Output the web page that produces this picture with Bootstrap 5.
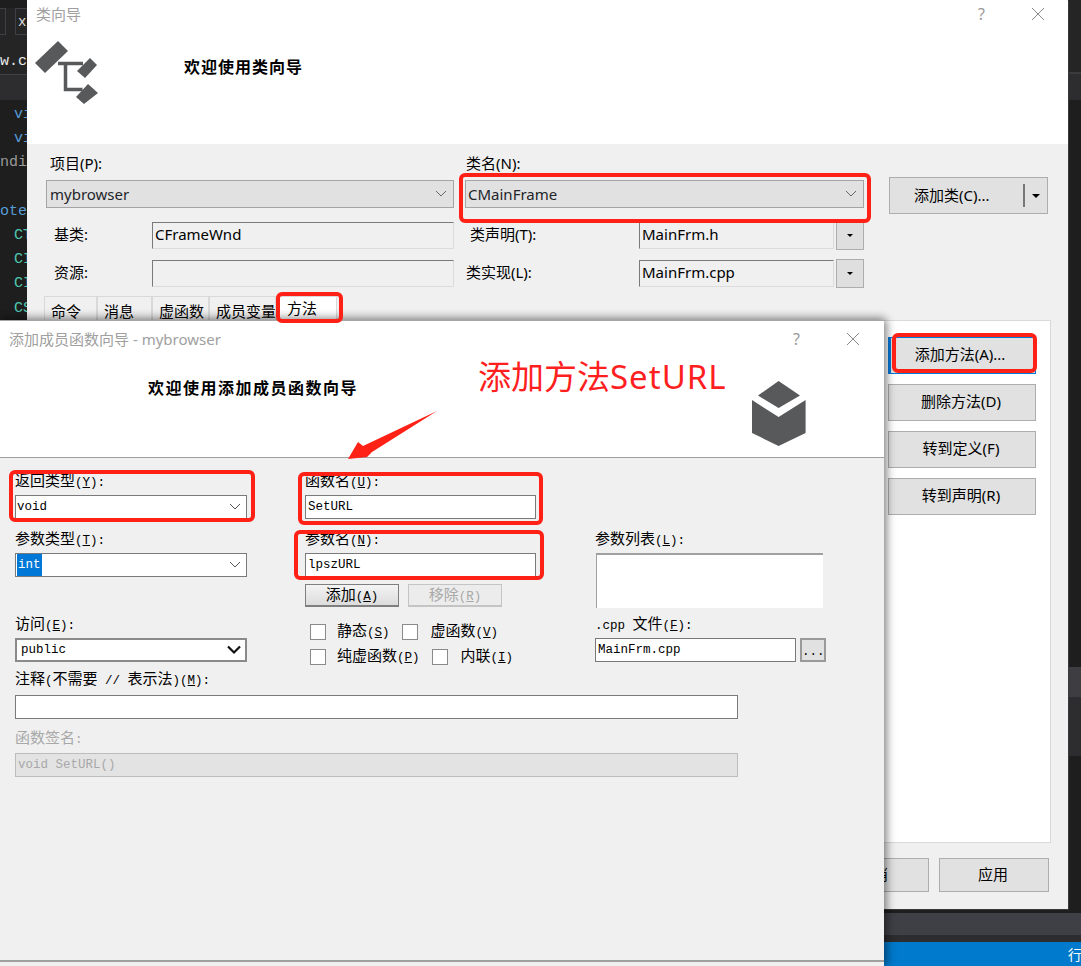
<!DOCTYPE html>
<html lang="zh-CN">
<head>
<meta charset="utf-8">
<title>类向导</title>
<link href="https://cdn.jsdelivr.net/npm/bootstrap@5.3.0/dist/css/bootstrap.min.css" rel="stylesheet">
<style>
html,body{margin:0;height:966px;overflow:hidden}
body{background:#1e1e1e;font-family:"Noto Sans","Noto Sans CJK SC",sans-serif;font-size:15px;line-height:17px;color:#000}
.desk{position:relative;width:1081px;height:966px;overflow:hidden}
.desk-top{height:913px}
.strip-l{width:27px;overflow:hidden;background:#1e1e1e}
.strip-r{width:13px;overflow:hidden}
.lt1{height:8px;background:#1e1e1e}
.lt2{height:27px;background:#252526;padding-right:0;gap:9px}
.lt2 i{display:block;border:1px solid #3f3f46;height:27px;width:6px;border-left:0}
.lt2 b{display:block;border:1px solid #3f3f46;border-right:0;height:27px;width:12px;color:#ddd;font:400 14px/26px "Liberation Mono",monospace;padding-left:2px}
.lt3{height:40px;background:#252526;color:#e8e8e8;font:15px/53px "Liberation Mono",monospace;border-bottom:1px solid #3f3f46;white-space:nowrap}
.lt4{height:25px;background:#2d2d30}
.codeln{font:15px/24.2px "Liberation Mono",monospace;white-space:nowrap;height:24.2px}
.codepad{padding-top:3px}
.ind{padding-left:14px}
.c-b{color:#569cd6}.c-g{color:#9b9b9b}.c-t{color:#4ec9b0}
.r1{height:72px;background:#252526}.r2{height:28px;background:#2d2d30;border-top:2px solid #3a3a3d}
.r3{height:567px;background:#1e1e1e}.r4{height:30px;background:#3e3e42}.r5{height:59px;background:#2d2d30}
.bar1{height:22px;background:#3f3f46}
.bar2{height:7px;background:#2d2d30}
.bar3{height:24px;background:#007acc;color:#fff;font-size:14px;line-height:25px;padding-left:1068px;white-space:nowrap}
.win{position:absolute;background:#f0f0f0}
.win-back{left:27px;top:0;width:1041px;height:909px;box-shadow:1px 1px 0 #3a3a3a}
.win-front{left:0;top:320px;width:884px;height:646px;border-top:1px solid #a6a6a6;box-shadow:0 -3px 8px rgba(0,0,0,.22),3px 0 9px rgba(0,0,0,.38)}
.head-back{height:144px;background:#fff}
.head-front{height:137px;background:#fff;border-bottom:1px solid #a0a0a0}
.ttl{color:#a0a0a0}
.ttl-back{height:28px;padding:0 23px 0 9px}
.ttl-front{height:36px;padding:0 24px 0 9px}
.help{font-size:16px;margin-right:46px;color:#9a9a9a}
.welcome{font-weight:700;font-size:16px;letter-spacing:1px;line-height:20px}
.w-back{margin:29px 0 0 85px}
.w-front{margin:21px 0 0 148px;letter-spacing:1.5px}
.icon-a{margin:13px 0 0 8px;display:block}
.body-back{height:765px;padding:11px 0 0 19px}
.form-a{display:grid;grid-template-columns:408px 399px;column-gap:11px}
.lab1{padding-left:4px;height:25px}
.lab2{padding-left:1px;height:25px}
.form-select.dd{background-image:none;height:28px;border:1px solid #a5a5a5;border-radius:0;background-color:#e1e1e1;padding:0 6px 0 3px;font-size:15px;line-height:26px;box-shadow:none}
.form-select.dd.cn{padding-left:2px}
.btn.vs{background:#e1e1e1;border:1px solid #adadad;border-radius:0;color:#000;font-size:15px;padding:0;line-height:17px}
.btn.vs.btn-class{width:159px;height:37px;margin:22px 0 0 25px;padding:0 0 0 24px;flex:none}
.btn-class .sep{width:2px;height:23px;background:#777;margin-left:33px}
.btn-class .car,.btn-mini .car{width:0;height:0;border:4px solid transparent;border-top-color:#000;border-bottom:0}
.btn-class .car{margin:0 0 0 7px}
.row2{display:grid;grid-template-columns:106px 302px 11px 174px 195px 28px;align-items:center;height:27px;margin-top:7px}
.row2.second{margin-top:11px}
.lb{padding-left:8px}
.lb-r{padding-left:5px}
.lb-r.flush{padding-left:1px}
.lb,.lb-r{padding-bottom:2px}
.form-control.ro{height:27px;border-radius:0;border:1px solid #7a7a7a;border-right-color:#dcdcdc;border-bottom-color:#dcdcdc;background:#f0f0f0;padding:0 2px 4px 2px;font-size:15px;color:#000;box-shadow:none}
.btn.vs.btn-mini{height:29px;width:28px;margin-left:2px;padding:0;background:#dfdfdf;border-color:#adadad}
.btn-mini .car{border-width:3px;border-bottom:0}
.tabbar{margin-left:-2px;height:24px;margin-top:10px;border:0;flex-wrap:nowrap}
.tabbar .nav-link{height:24px;border:1px solid #d9d9d9;border-width:1px 1px 0 1px;border-radius:0;margin:0;padding:5px 0 0 6px;background:#f0f0f0;color:#000;font-size:15px;line-height:19px;white-space:nowrap;overflow:hidden}
.tabbar .nav-link.active{background:#fff;border-color:#d9d9d9;padding:2px 0 0 10px;width:61px}
.t1{width:53px}.t2{width:55px}.t3{width:57px}.t4{width:67px}
.panel{width:1007px;margin-left:-2px;height:523px;background:#fff;border:1px solid #d9d9d9;padding:16px 14px 0 0;gap:10px}
.btn.vs.side{width:148px;height:37px;padding:0 2px 2px 0}
.btn.vs.side.cur{border:1px solid #0078d7;border-left-width:3px;padding-right:6px}
.foot{margin-top:15px;width:1003px;gap:10px}
.btn.vs.footb{width:110px;height:34px;padding:0 2px 1px 0}
.body-front{padding:14px 0 0 15px;font-family:"Noto Sans CJK SC",sans-serif;font-size:15px;line-height:16px}
.lt{font-family:"Liberation Mono",monospace;font-size:12.5px}
.gridf{display:grid;grid-template-columns:232px 231px 231px;column-gap:58px}
.gridf .gap-b{margin-top:11px}
.c3{margin-left:1px}
.fld-lab{height:23px;white-space:nowrap}
.form-select.cb,.form-control.tx{height:24px;border-radius:0;border:1px solid #7a7a7a;background:#fff;padding:0 1px 0 2px;font-family:"Liberation Mono",monospace;font-size:12.5px;line-height:22px;box-shadow:none;color:#000}
.form-select.cb{background-image:none;padding:0 5px 0 1px}
.form-select.cb.thick{border:2px solid #8a8a8a;padding:0 4px}
.sel{background:#0078d7;color:#fff;padding:0 1px}
.listbox{height:55px;width:227px;margin-left:1px;background:#fff;border-top:2px solid #a0a0a0;border-left:1px solid #a0a0a0}
.btn.small-b{width:94px;height:23px;border:1px solid #7f7f7f;border-bottom-width:2px;background:linear-gradient(#f4f4f4,#dcdcdc);color:#000;font-family:"Noto Sans CJK SC",sans-serif;padding:0;line-height:17px;border-radius:0;font-size:15px}
.btn.small-b:disabled{opacity:1;color:#a8a8a8;background:#ececec;border-color:#c4c4c4}
.rowc{margin-top:7px;gap:9px}
.rowd{margin-top:7px}
.chk-wrap{margin-top:7px;height:47px;padding:4px 0 0 5px;line-height:18px}
.chk-line{height:25px;white-space:nowrap}
.chk-line .form-check-input{width:16px;height:16px;margin:0 11px 0 0;border-radius:0;border:1px solid #8a8a8a;flex:none;background-color:#fff}
.chk-line label+.form-check-input{margin-left:12px;margin-right:13px}
.btn.dots{width:26px;height:24px;margin-left:4px;padding:0;border:2px solid #9a9a9a;background:#e1e1e1;font-family:"Liberation Mono",monospace;font-size:12.5px;line-height:24px;border-radius:0;color:#000}
.form-control.cppw{width:201px;flex:none}
.wide{width:723px}
.lab-wide{margin-top:8px;height:25px}
.lab-dis{margin-top:10px;height:24px;color:#a8a8a8}
.form-control.tx.dis{background:#e3e3e3;border:1px solid #bcbcbc;color:#a8a8a8}
.front-bot{position:absolute;left:0;right:0;bottom:4px;height:2px;background:#a0a0a0}
.mark-box{position:absolute;border:4px solid #ff2116;border-radius:6px;pointer-events:none}
.mb1{left:459px;top:173px;width:412px;height:50px}
.mb2{left:276px;top:292px;width:67px;height:31px}
.mb3{left:892px;top:333px;width:145px;height:40px}
.mb4{left:9px;top:470px;width:246px;height:52px}
.mb5{left:298px;top:472px;width:245px;height:53px}
.mb6{left:294px;top:530px;width:250px;height:50px}
.mark-text{position:absolute;left:478px;top:355px;color:#ff1f1f;font-size:33px;line-height:44px;white-space:nowrap;font-family:"Noto Sans","Noto Sans CJK SC",sans-serif}
.mark-text span{letter-spacing:1px}
.arrow{position:absolute;left:340px;top:405px}
.cube{position:absolute;left:752px;top:60px}
</style>
</head>
<body>
<div class="desk">
  <div class="desk-top d-flex justify-content-between">
    <div class="strip-l">
      <div class="lt1"></div>
      <div class="lt2 d-flex"><i></i><b>x</b></div>
      <div class="lt3">w.c</div>
      <div class="lt4"></div>
      <div class="codepad">
        <div class="codeln ind c-b">vi</div>
        <div class="codeln ind c-b">vi</div>
        <div class="codeln c-g">ndi</div>
        <div class="codeln">&nbsp;</div>
        <div class="codeln c-b">ote</div>
        <div class="codeln ind c-t">CT</div>
        <div class="codeln ind c-t">CI</div>
        <div class="codeln ind c-t">CI</div>
        <div class="codeln ind c-t">CS</div>
      </div>
    </div>
    <div class="strip-r">
      <div class="r1"></div><div class="r2"></div><div class="r3"></div><div class="r4"></div><div class="r5"></div>
    </div>
  </div>
  <div class="bar1"></div>
  <div class="bar2"></div>
  <div class="bar3">行</div>

  <!-- 类向导 -->
  <section class="win win-back">
    <div class="head-back">
      <div class="ttl ttl-back d-flex align-items-center">
        <span class="me-auto">类向导</span>
        <span class="help">?</span>
        <svg width="14" height="14" viewBox="0 0 14 14"><path d="M1 1l12 12M13 1L1 13" stroke="#8a8a8a" fill="none"/></svg>
      </div>
      <div class="d-flex">
        <svg class="icon-a" width="64" height="64" viewBox="35 41 64 64">
          <g fill="#58595b">
            <path d="M58 41l10 10-23 22-10-10z"/>
            <path d="M90 58l7 7-12 13-8-7z"/>
            <path d="M88 84l10 9-14 11-8-7z"/>
          </g>
          <path d="M58 63.500h25M65.500 63v26.500h17" fill="none" stroke="#58595b" stroke-width="3.500"/>
        </svg>
        <div class="welcome w-back">欢迎使用类向导</div>
      </div>
    </div>
    <div class="body-back">
      <div class="d-flex align-items-start">
        <div class="form-a">
          <div class="lab1">项目(P):</div>
          <div class="lab2">类名(N):</div>
          <div class="form-select dd d-flex align-items-center justify-content-between">mybrowser
            <svg width="12" height="8" viewBox="0 0 12 8"><path d="M1 1l5 5 5-5" fill="none" stroke="#666"/></svg></div>
          <div class="form-select dd cn d-flex align-items-center justify-content-between">CMainFrame
            <svg width="12" height="8" viewBox="0 0 12 8"><path d="M1 1l5 5 5-5" fill="none" stroke="#666"/></svg></div>
        </div>
        <button type="button" class="btn vs btn-class d-flex align-items-center">添加类(C)...<span class="sep"></span><span class="car"></span></button>
      </div>
      <div class="row2">
        <div class="lb">基类:</div>
        <input class="form-control ro" value="CFrameWnd" readonly>
        <div></div>
        <div class="lb-r">类声明(T):</div>
        <input class="form-control ro" value="MainFrm.h" readonly>
        <button type="button" class="btn vs btn-mini d-flex align-items-center justify-content-center"><span class="car"></span></button>
      </div>
      <div class="row2 second">
        <div class="lb">资源:</div>
        <input class="form-control ro" value="" readonly>
        <div></div>
        <div class="lb-r flush">类实现(L):</div>
        <input class="form-control ro" value="MainFrm.cpp" readonly>
        <button type="button" class="btn vs btn-mini d-flex align-items-center justify-content-center"><span class="car"></span></button>
      </div>
      <ul class="nav nav-tabs tabbar">
        <li class="nav-item"><a class="nav-link t1" href="#">命令</a></li>
        <li class="nav-item"><a class="nav-link t2" href="#">消息</a></li>
        <li class="nav-item"><a class="nav-link t3" href="#">虚函数</a></li>
        <li class="nav-item"><a class="nav-link t4" href="#">成员变量</a></li>
        <li class="nav-item"><a class="nav-link active" href="#">方法</a></li>
      </ul>
      <div class="panel d-flex flex-column align-items-end">
        <button type="button" class="btn vs side cur">添加方法(A)...</button>
        <button type="button" class="btn vs side">删除方法(D)</button>
        <button type="button" class="btn vs side">转到定义(F)</button>
        <button type="button" class="btn vs side">转到声明(R)</button>
      </div>
      <div class="foot d-flex justify-content-end">
        <button type="button" class="btn vs footb">确定</button>
        <button type="button" class="btn vs footb">取消</button>
        <button type="button" class="btn vs footb">应用</button>
      </div>
    </div>
  </section>

  <!-- 添加成员函数向导 -->
  <section class="win win-front">
    <div class="head-front position-relative">
      <div class="ttl ttl-front d-flex align-items-center">
        <span class="me-auto">添加成员函数向导 - mybrowser</span>
        <span class="help">?</span>
        <svg width="14" height="14" viewBox="0 0 14 14"><path d="M1 1l12 12M13 1L1 13" stroke="#8a8a8a" fill="none"/></svg>
      </div>
      <div class="welcome w-front">欢迎使用添加成员函数向导</div>
      <svg class="cube" width="54" height="66" viewBox="752 380 54 66">
        <g fill="#58595b">
          <path d="M778.600 380L800 394.500 778.600 407 758 394.500z"/>
          <path d="M752 399l26.600 17 27-17v33l-27 13-26.600-13z"/>
        </g>
      </svg>
    </div>
    <div class="body-front">
      <div class="gridf">
        <div>
          <div class="fld-lab">返回类型<span class="lt">(<u>Y</u>):</span></div>
          <div class="form-select cb d-flex align-items-center justify-content-between">void
            <svg width="12" height="8" viewBox="0 0 12 8"><path d="M1 1l5 5 5-5" fill="none" stroke="#555"/></svg></div>
        </div>
        <div>
          <div class="fld-lab">函数名<span class="lt">(<u>U</u>):</span></div>
          <input class="form-control tx" value="SetURL">
        </div>
        <div></div>

        <div class="gap-b">
          <div class="fld-lab">参数类型<span class="lt">(<u>T</u>):</span></div>
          <div class="form-select cb d-flex align-items-center justify-content-between"><span class="sel">int</span>
            <svg width="12" height="8" viewBox="0 0 12 8"><path d="M1 1l5 5 5-5" fill="none" stroke="#555"/></svg></div>
        </div>
        <div class="gap-b">
          <div class="fld-lab">参数名<span class="lt">(<u>N</u>):</span></div>
          <input class="form-control tx" value="lpszURL">
          <div class="d-flex rowc">
            <button type="button" class="btn small-b">添加<span class="lt">(<u>A</u>)</span></button>
            <button type="button" class="btn small-b" disabled>移除<span class="lt">(<u>R</u>)</span></button>
          </div>
        </div>
        <div class="gap-b c3">
          <div class="fld-lab">参数列表<span class="lt">(<u>L</u>):</span></div>
          <div class="listbox"></div>
        </div>

        <div class="rowd">
          <div class="fld-lab">访问<span class="lt">(<u>E</u>):</span></div>
          <div class="form-select cb thick d-flex align-items-center justify-content-between">public
            <svg width="14" height="10" viewBox="0 0 14 10"><path d="M1 1.500l6 6 6-6" fill="none" stroke="#111" stroke-width="2.200"/></svg></div>
        </div>
        <div class="chk-wrap">
          <div class="chk-line d-flex align-items-center">
            <input class="form-check-input" type="checkbox" id="c1"><label for="c1">静态<span class="lt">(<u>S</u>)</span></label>
            <input class="form-check-input" type="checkbox" id="c2"><label for="c2">虚函数<span class="lt">(<u>V</u>)</span></label>
          </div>
          <div class="chk-line d-flex align-items-center">
            <input class="form-check-input" type="checkbox" id="c3"><label for="c3">纯虚函数<span class="lt">(<u>P</u>)</span></label>
            <input class="form-check-input" type="checkbox" id="c4"><label for="c4">内联<span class="lt">(<u>I</u>)</span></label>
          </div>
        </div>
        <div class="rowd c3">
          <div class="fld-lab"><span class="lt">.cpp </span>文件<span class="lt">(<u>F</u>):</span></div>
          <div class="d-flex">
            <input class="form-control tx cppw" value="MainFrm.cpp">
            <button type="button" class="btn dots">...</button>
          </div>
        </div>
      </div>
      <div class="wide">
        <div class="lab-wide">注释<span class="lt">(</span>不需要<span class="lt"> // </span>表示法<span class="lt">)(<u>M</u>):</span></div>
        <input class="form-control tx" value="">
        <div class="lab-dis">函数签名<span class="lt">:</span></div>
        <input class="form-control tx dis" value="void SetURL()" disabled>
      </div>
    </div>
    <div class="front-bot"></div>
  </section>

  <!-- 标注 -->
  <div class="mark-box mb1"></div>
  <div class="mark-box mb2"></div>
  <div class="mark-box mb3"></div>
  <div class="mark-box mb4"></div>
  <div class="mark-box mb5"></div>
  <div class="mark-box mb6"></div>
  <div class="mark-text">添加方法<span>SetURL</span></div>
  <svg class="arrow" width="100" height="60" viewBox="340 405 100 60"><path d="M437 411L363 446 358 442 348 459 367 457 372 452z" fill="#ff2116"/></svg>
</div>
<script src="https://cdn.jsdelivr.net/npm/bootstrap@5.3.0/dist/js/bootstrap.bundle.min.js"></script>
</body>
</html>
